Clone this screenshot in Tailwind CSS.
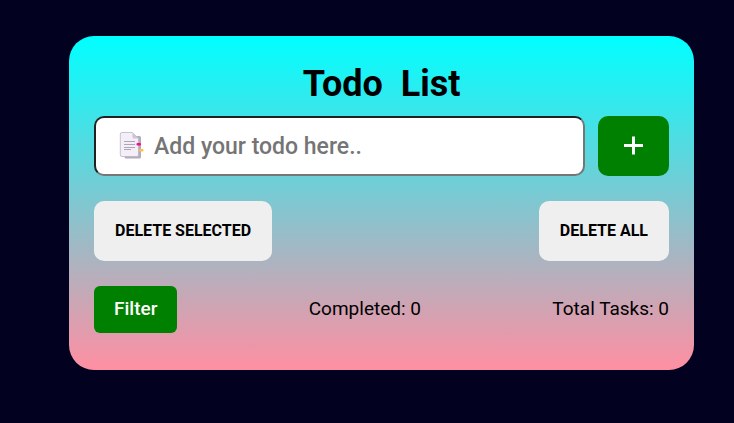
<!DOCTYPE html>
<html lang="en">
<head>
<meta charset="utf-8">
<meta name="viewport" content="width=device-width, initial-scale=1">
<title>Todo List</title>
<script src="https://cdn.jsdelivr.net/npm/@tailwindcss/browser@4"></script>
</head>
<body class="min-h-screen bg-[#020220] pt-9 pr-10 pb-13 pl-[69px] font-['Roboto','Liberation_Sans',sans-serif] text-black">
<main class="rounded-[25px] bg-linear-to-b/srgb from-[#00ffff] to-[#ff8fa2] px-[25px] pt-6 pb-[37px]">
  <h1 class="text-center text-4xl leading-[48px] font-bold whitespace-pre">Todo  List</h1>
  <form class="mt-2 flex gap-[13px]">
    <div class="relative min-w-0 flex-1">
      <input type="text" aria-label="New todo" placeholder="Add your todo here.." class="h-[60px] w-full rounded-[10px] border-2 border-t-[#212121] border-r-[#767676] border-b-[#767676] border-l-[#212121] bg-white pr-6 pl-[58px] text-[23px] font-medium placeholder:text-[#757575]">
      <svg class="pointer-events-none absolute top-4 left-6 h-7 w-7" viewBox="0 0 28 28" aria-hidden="true">
        <path d="M7 4h14.500q1.500 0 1.500 1.500V25q0 1.500-1.500 1.500H8Q6.500 26.500 6.500 25z" fill="#b4acbc"/>
        <path d="M4 .5h10.500l6 6V23q0 1.500-1.500 1.500H4Q2.300 24.500 2.300 23V2Q2.300 .5 4 .5z" fill="#f3eef8" stroke="#bcb4c4" stroke-width=".8"/>
        <path d="M14.500 .5l6 6H16q-1.500 0-1.500-1.500z" fill="#cdc4d6"/>
        <path d="M6 9.500h11M6 12.500h11M6 15.500h11M6 17.500h7" stroke="#9b93a3" stroke-width=".8"/>
        <rect x="18.500" y="11" width="4.500" height="2.400" rx="1" fill="#f70a8d"/>
        <rect x="21" y="17" width="4.500" height="2.400" rx="1" fill="#fcc13d"/>
      </svg>
    </div>
    <button type="button" aria-label="Add todo" class="flex h-[60px] w-[71px] items-center justify-center rounded-[10px] bg-[#008000] text-white">
      <svg class="h-5 w-5" viewBox="0 0 20 20" fill="none" stroke="currentColor" stroke-width="3" aria-hidden="true"><path d="M0 9.500h19M9.500 .5v18"/></svg>
    </button>
  </form>
  <div class="mt-[25px] flex justify-between">
    <button type="button" class="h-[60px] rounded-[10px] bg-[#efefef] px-[21px] text-base font-bold">DELETE SELECTED</button>
    <button type="button" class="h-[60px] rounded-[10px] bg-[#efefef] px-[21px] text-base font-bold">DELETE ALL</button>
  </div>
  <div class="mt-[25px] flex items-center justify-between text-[19px]">
    <button type="button" class="h-[47px] rounded-md bg-[#008000] px-5 font-medium text-white">Filter</button>
    <p>Completed: 0</p>
    <p>Total Tasks: 0</p>
  </div>
</main>
</body>
</html>
